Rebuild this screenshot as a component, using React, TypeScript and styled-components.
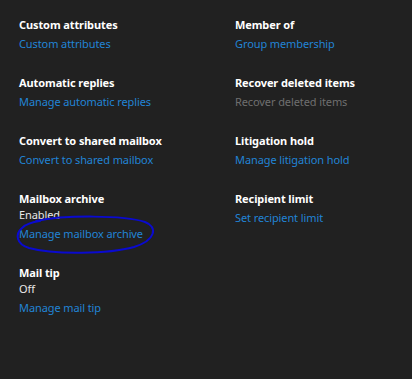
import { createGlobalStyle, styled } from "styled-components";

const GlobalStyle = createGlobalStyle`
  html, body {
    margin: 0;
    padding: 0;
    background: #212121;
  }
`;

const Page = styled.div`
  position: relative;
  width: 412px;
  height: 379px;
  box-sizing: border-box;
  padding: 17px 0 0 19px;
  background: #212121;
  font-family: "Noto Sans", "Open Sans", sans-serif;
  font-size: 11px;
  letter-spacing: -0.1px;
  overflow: hidden;
`;

const Grid = styled.div`
  display: grid;
  grid-template-columns: 216px 1fr;
  row-gap: 23px;
  align-items: start;
`;

const Item = styled.div`
  display: flex;
  flex-direction: column;
`;

const Title = styled.div`
  color: #ffffff;
  font-weight: 700;
  line-height: 16px;
`;

const Status = styled.div`
  color: #e8e8e8;
  line-height: 16px;
`;

const Link = styled.a<{ $disabled?: boolean }>`
  margin-top: 3px;
  line-height: 16px;
  color: ${(p) => (p.$disabled ? "#6f6f6f" : "#2184d6")};
  text-decoration: none;
  cursor: ${(p) => (p.$disabled ? "default" : "pointer")};
`;

const Circle = styled.svg`
  position: absolute;
  left: 14px;
  top: 214px;
  pointer-events: none;
`;

interface Entry {
  title: string;
  status?: string;
  link: string;
  disabled?: boolean;
}

const entries: Entry[] = [
  { title: "Custom attributes", link: "Custom attributes" },
  { title: "Member of", link: "Group membership" },
  { title: "Automatic replies", link: "Manage automatic replies" },
  { title: "Recover deleted items", link: "Recover deleted items", disabled: true },
  { title: "Convert to shared mailbox", link: "Convert to shared mailbox" },
  { title: "Litigation hold", link: "Manage litigation hold" },
  { title: "Mailbox archive", status: "Enabled", link: "Manage mailbox archive" },
  { title: "Recipient limit", link: "Set recipient limit" },
  { title: "Mail tip", status: "Off", link: "Manage mail tip" },
];

const App = () => {
  return (
    <>
      <GlobalStyle />
      <Page>
        <Grid>
          {entries.map((e) => (
            <Item key={e.title}>
              <Title>{e.title}</Title>
              {e.status && <Status>{e.status}</Status>}
              <Link $disabled={e.disabled}>{e.link}</Link>
            </Item>
          ))}
        </Grid>
        <Circle width="145" height="42" viewBox="0 0 145 42">
          <path
            d="M22 7 C 50 1, 110 1, 131 8 C 144 13, 142 26, 120 33 C 95 40, 40 41, 15 34 C 2 30, 1 20, 8 14 C 12 10, 18 8, 26 7"
            fill="none"
            stroke="#0a0ad0"
            strokeWidth="2"
            strokeLinecap="round"
          />
        </Circle>
      </Page>
    </>
  );
};

export default App;
